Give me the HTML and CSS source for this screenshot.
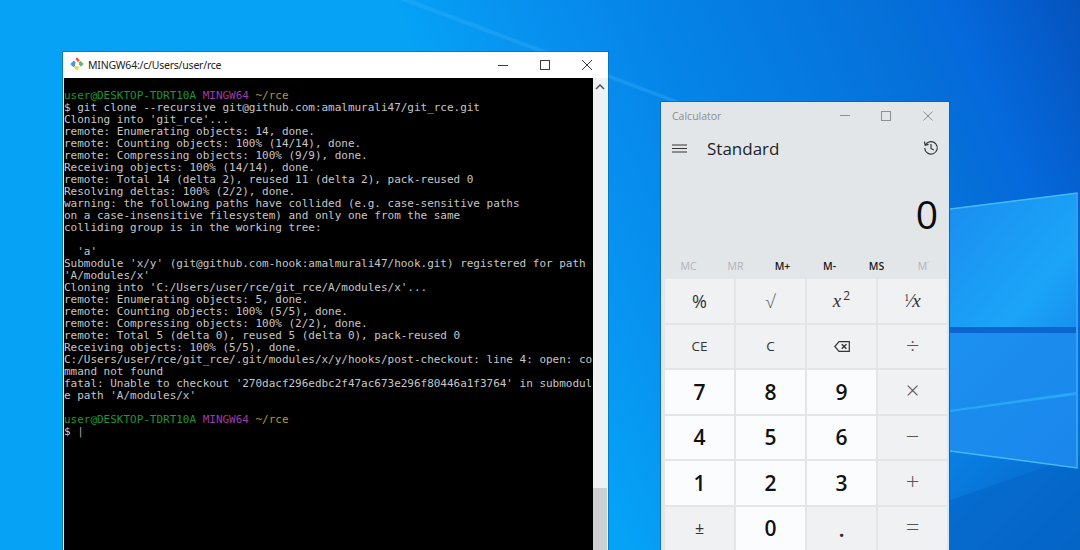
FILE: index.html
```html
<!DOCTYPE html>
<html lang="en">
<head>
<meta charset="utf-8">
<title>Desktop</title>
<link rel="stylesheet" href="styles.css">
</head>
<body>
<main class="desktop">
  <svg class="wallpaper" viewBox="0 0 1080 550" width="1080" height="550" aria-hidden="true">
    <defs>
      <linearGradient id="sky" x1="500" y1="250" x2="1080" y2="0" gradientUnits="userSpaceOnUse">
        <stop offset="0" stop-color="#05a2f6"/>
        <stop offset="0.17" stop-color="#0892f0"/>
        <stop offset="0.35" stop-color="#0585e8"/>
        <stop offset="0.73" stop-color="#056fd8"/>
        <stop offset="0.81" stop-color="#0569dc"/>
        <stop offset="1" stop-color="#0553bd"/>
      </linearGradient>
      <linearGradient id="lower" x1="950" y1="440" x2="1060" y2="550" gradientUnits="userSpaceOnUse">
        <stop offset="0" stop-color="#0a82e6"/>
        <stop offset="1" stop-color="#0561c4"/>
      </linearGradient>
      <linearGradient id="paneTop" x1="950" y1="210" x2="1076" y2="320" gradientUnits="userSpaceOnUse">
        <stop offset="0" stop-color="#1a8ff0"/>
        <stop offset="0.7" stop-color="#1ba5f8"/>
        <stop offset="1" stop-color="#1792f0"/>
      </linearGradient>
      <linearGradient id="paneBottom" x1="950" y1="335" x2="1076" y2="465" gradientUnits="userSpaceOnUse">
        <stop offset="0" stop-color="#1c90f0"/>
        <stop offset="1" stop-color="#1a86ec"/>
      </linearGradient>
    </defs>
    <rect width="1080" height="550" fill="url(#sky)"/>
    <polygon points="950,450 1080,470 1080,550 950,550" fill="url(#lower)"/>
    <polygon points="950,500 1080,455 1080,550 950,550" fill="#0566c9" opacity="0.7"/>
    <polygon points="400,0 412,0 682,102 672,102" fill="#3ab0fa" opacity="0.35"/>
    <polygon points="950,209 1076,193 1076,327 950,327" fill="url(#paneTop)"/>
    <rect x="950" y="327" width="130" height="6" fill="#0b66cf"/>
    <polygon points="950,333 1076,333 1076,468 950,451" fill="url(#paneBottom)"/>
    <polygon points="950,410 1076,392 1076,395 950,412" fill="#2fb4fb" opacity="0.7"/>
    <polyline points="950,209 1077,193 1077,468 950,451" fill="none" stroke="#52c8f8" stroke-width="1.5" opacity="0.8"/>
  </svg>

  <section class="win terminal-win">
    <header class="term-title">
      <svg class="git-logo" viewBox="0 0 14 14" width="14" height="14" aria-hidden="true">
        <path d="M7 0.3 9.9 3.2 8 5 6.9 4 5.5 2Z" fill="#e8584a"/>
        <path d="M10.4 3.7 13.7 7 11 9.7 8.9 7.6 9 5.2Z" fill="#69b86a"/>
        <path d="M4.6 9 9.6 9.4 7 13.7 4 10.8Z" fill="#ecd45a"/>
        <path d="M3.8 3.6 5.6 5.4 5 8.6 3.4 10.2 0.3 7Z" fill="#4f97dc"/>
      </svg>
      <span class="term-name">MINGW64:/c/Users/user/rce</span>
      <div class="caption term-caption">
        <svg viewBox="0 0 10 10" width="10" height="10" aria-hidden="true"><path d="M0 5.5H10" class="cap-line"/></svg>
        <svg viewBox="0 0 10 10" width="10" height="10" aria-hidden="true"><rect x="0.5" y="0.5" width="9" height="9" class="cap-line"/></svg>
        <svg viewBox="0 0 10 10" width="10" height="10" aria-hidden="true"><path d="M0 0 10 10M10 0 0 10" class="cap-line"/></svg>
      </div>
    </header>
    <div class="term-body">
<pre class="console"><span class="green">user@DESKTOP-TDRT10A</span> <span class="purple">MINGW64</span> <span class="amber">~/rce</span>
$ git clone --recursive git@github.com:amalmurali47/git_rce.git
Cloning into 'git_rce'...
remote: Enumerating objects: 14, done.
remote: Counting objects: 100% (14/14), done.
remote: Compressing objects: 100% (9/9), done.
Receiving objects: 100% (14/14), done.
remote: Total 14 (delta 2), reused 11 (delta 2), pack-reused 0
Resolving deltas: 100% (2/2), done.
warning: the following paths have collided (e.g. case-sensitive paths
on a case-insensitive filesystem) and only one from the same
colliding group is in the working tree:

  'a'
Submodule 'x/y' (git@github.com-hook:amalmurali47/hook.git) registered for path
'A/modules/x'
Cloning into 'C:/Users/user/rce/git_rce/A/modules/x'...
remote: Enumerating objects: 5, done.
remote: Counting objects: 100% (5/5), done.
remote: Compressing objects: 100% (2/2), done.
remote: Total 5 (delta 0), reused 5 (delta 0), pack-reused 0
Receiving objects: 100% (5/5), done.
C:/Users/user/rce/git_rce/.git/modules/x/y/hooks/post-checkout: line 4: open: co
mmand not found
fatal: Unable to checkout '270dacf296edbc2f47ac673e296f80446a1f3764' in submodul
e path 'A/modules/x'

<span class="green">user@DESKTOP-TDRT10A</span> <span class="purple">MINGW64</span> <span class="amber">~/rce</span>
$ <span class="cursor">|</span></pre>
      <div class="scrollbar">
        <svg class="scroll-up" viewBox="0 0 10 6" width="10" height="6" aria-hidden="true"><path d="M1 5 5 1 9 5" fill="none" stroke="#555" stroke-width="1.5"/></svg>
        <div class="scroll-thumb"></div>
      </div>
    </div>
  </section>

  <section class="win calc-win">
    <header class="calc-title">
      <span class="calc-name">Calculator</span>
      <div class="caption calc-caption">
        <svg viewBox="0 0 10 10" width="10" height="10" aria-hidden="true"><path d="M0 4.5H10" class="cap-faint"/></svg>
        <svg viewBox="0 0 10 10" width="10" height="10" aria-hidden="true"><rect x="0.5" y="0.5" width="9" height="9" class="cap-faint"/></svg>
        <svg viewBox="0 0 10 10" width="10" height="10" aria-hidden="true"><path d="M0.5 0.5 9.5 9.5M9.5 0.5 0.5 9.5" class="cap-faint"/></svg>
      </div>
    </header>
    <div class="calc-head">
      <svg class="burger" viewBox="0 0 15 9" width="15" height="9" aria-hidden="true"><path d="M0 1H15M0 4.5H15M0 8H15" fill="none" stroke="#333" stroke-width="1"/></svg>
      <span class="mode">Standard</span>
      <svg class="history" viewBox="0 0 16 16" width="16" height="16" aria-hidden="true">
        <path d="M2.6 4.6A6.3 6.3 0 1 1 1.7 8" fill="none" stroke="#333" stroke-width="1.2"/>
        <path d="M1.4 1.6 2.2 5.2 5.6 4.4" fill="none" stroke="#333" stroke-width="1.2"/>
        <path d="M8 4V8.4L10.8 10" fill="none" stroke="#333" stroke-width="1.2"/>
      </svg>
    </div>
    <div class="display">0</div>
    <div class="memory">
      <span class="mem off">MC</span><span class="mem off">MR</span><span class="mem">M+</span><span class="mem">M-</span><span class="mem">MS</span><span class="mem off">M<sup class="mem-sup">˅</sup></span>
    </div>
    <div class="keys">
      <div class="key pct">%</div>
      <div class="key thin">√</div>
      <div class="key math"><span>x<sup class="sq">2</sup></span></div>
      <div class="key math"><span><sup class="frac">1</sup>⁄x</span></div>
      <div class="key small">CE</div>
      <div class="key small">C</div>
      <div class="key">
        <svg viewBox="0 0 16 11" width="16" height="11" aria-hidden="true"><path d="M5 0.7H15.3V10.3H5L0.8 5.5Z" fill="none" stroke="#333" stroke-width="1.2"/><path d="M7.8 3.2 12.4 7.8M12.4 3.2 7.8 7.8" fill="none" stroke="#333" stroke-width="1.4"/></svg>
      </div>
      <div class="key op">÷</div>
      <div class="key num">7</div>
      <div class="key num">8</div>
      <div class="key num">9</div>
      <div class="key op">×</div>
      <div class="key num">4</div>
      <div class="key num">5</div>
      <div class="key num">6</div>
      <div class="key op">−</div>
      <div class="key num">1</div>
      <div class="key num">2</div>
      <div class="key num">3</div>
      <div class="key op">+</div>
      <div class="key pm">±</div>
      <div class="key num">0</div>
      <div class="key dot">.</div>
      <div class="key op">=</div>
    </div>
  </section>
</main>
</body>
</html>
```
FILE: styles.css
```css
* { box-sizing: border-box; }
html, body { margin: 0; height: 100%; overflow: hidden; }
body { background: #0a93ef; font-family: "Open Sans", "Noto Sans", sans-serif; }

.desktop { position: relative; width: 1080px; height: 550px; overflow: hidden; }
.wallpaper { position: absolute; left: 0; top: 0; display: block; }

.win { position: absolute; display: flex; flex-direction: column; overflow: hidden; }

.terminal-win {
  left: 63px; top: 52px; width: 545px; height: 498px;
  background: #f0f2f4;
  box-shadow: 0 0 0 1px rgba(8, 96, 170, .55);
}
.term-title {
  height: 26px; flex: none; display: flex; align-items: center;
  padding: 0 0 0 7px; background: #fff; color: #222;
}
.git-logo { flex: none; margin-right: 4px; margin-top: -2px; }
.term-name { font-size: 10.5px; letter-spacing: -.22px; font-family: "Noto Sans", sans-serif; }
.caption { margin-left: auto; display: flex; align-items: center; }
.term-caption { gap: 32px; padding-right: 16px; }
.term-caption svg { display: block; }
.cap-line { fill: none; stroke: #3c3c3c; stroke-width: 1; }
.cap-faint { fill: none; stroke: #8d9093; stroke-width: 1; }

.term-body { flex: 1; min-height: 0; display: flex; padding-left: 1px; padding-right: 1px; }
.console {
  flex: 1; min-width: 0; margin: 0; padding: 12px 0 0 0;
  background: #000; color: #c6c6c6; overflow: hidden;
  font: 11px/12px "DejaVu Sans Mono", "Liberation Mono", monospace;
  letter-spacing: -.02px;
  white-space: pre;
}
.green { color: #1a9636; }
.purple { color: #a03aa8; }
.amber { color: #b39a2a; }
.cursor { color: #a8a8a8; }

.scrollbar {
  width: 14px; flex: none; display: flex; flex-direction: column; align-items: center;
  background: #eef2f5;
}
.scroll-up { margin-top: 6px; flex: none; }
.scroll-thumb { margin-top: auto; width: 100%; height: 62px; background: #ccd0d2; }

.calc-win {
  left: 661px; top: 102px; width: 288px; height: 448px;
  background: #e3e6e9;
  box-shadow: 0 0 0 1px rgba(10, 92, 170, .6);
  border-left: 1px solid #d4e7f2;
  border-right: 1px solid #d4e7f2;
  color: #111;
}
.calc-title { height: 27px; flex: none; display: flex; align-items: center; padding-left: 10px; }
.calc-name { font-size: 10.5px; color: #8a8d90; }
.calc-caption { gap: 31.5px; padding-right: 15.5px; }
.calc-caption svg { display: block; }

.calc-head { height: 38px; flex: none; display: flex; align-items: center; padding: 0 9px 0 10px; }
.burger { flex: none; }
.mode { margin-left: 20px; font-size: 17px; color: #1e1e1e; }
.history { margin-left: auto; }

.display {
  height: 85px; flex: none; display: flex; justify-content: flex-end; align-items: center;
  padding: 7px 10px 0 0; font-size: 39px; font-weight: 500; line-height: 1; color: #0c0c0c;
}
.memory {
  height: 27px; flex: none; display: grid; grid-template-columns: repeat(6, 47px);
  padding-left: 3px; align-items: center;
}
.mem { font-size: 10.5px; font-weight: 600; text-align: center; color: #1a1a1a; }
.mem.off { color: #b0b3b6; font-weight: 400; }
.mem-sup { font-size: 7px; line-height: 0; vertical-align: 3px; }

.keys {
  flex: none; display: grid; grid-template-columns: repeat(4, 69px); grid-auto-rows: 43.5px;
  gap: 2px; padding: 0 0 0 3px;
}
.key {
  display: flex; align-items: center; justify-content: center;
  background: #eff1f3; color: #333; font-size: 16px;
}
.pct { font-size: 18px; }
.small { font-size: 13.5px; }
.pm { font-size: 16px; }
.thin { font-weight: 300; font-size: 18px; color: #555; }
.math { font-family: "Liberation Serif", serif; font-style: italic; font-size: 19px; }
.sq { font-size: 12px; line-height: 0; font-style: normal; font-family: "Open Sans", sans-serif; margin-left: 2px; vertical-align: 7px; }
.frac { font-size: 10px; line-height: 0; font-style: normal; vertical-align: 6px; }
.op { font-size: 24px; font-weight: 300; color: #555; padding-bottom: 4px; }
.dot { font-size: 20px; font-weight: 700; padding-top: 3px; }
.num { background: #fbfcfd; color: #111; font-size: 21px; font-weight: 600; }
```
